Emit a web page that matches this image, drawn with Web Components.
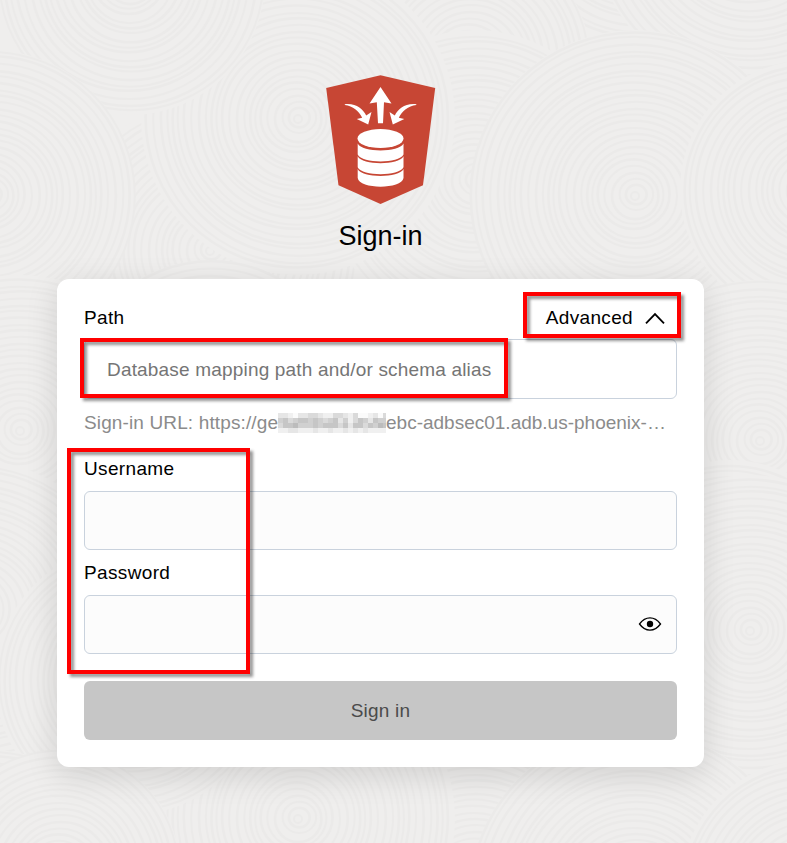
<!DOCTYPE html>
<html lang="en"><head><meta charset="utf-8"><title>Sign-in</title>
<style>
html,body{margin:0;height:843px;overflow:hidden;background:#efeeed}
body{font-family:"Liberation Sans",Arial,sans-serif;color:#000}
</style></head><body><signin-page></signin-page>
<script>
const define=(name,html,setup)=>customElements.define(name,class extends HTMLElement{
  constructor(){super();this.attachShadow({mode:'open'}).innerHTML=html;}
  connectedCallback(){if(setup)setup(this,this.shadowRoot);}
});

/* Overlapping discs of faint concentric rings. */
define('ring-backdrop',`<style>:host{position:absolute;inset:0;z-index:-1}svg{display:block}</style>
<svg width="787" height="843" fill="none"></svg>`,(host,root)=>{
  const base=[[635,-75,118],[470,60,120],[750,-70,155],[210,250,150],[475,180,150],[298,118,157],[130,-20,135],[-10,195,145],[635,195,165],[810,190,130],
    [20,430,155],[210,400,140],[760,440,160],[-25,610,150],[730,590,130]];
  const all=[...base,...base.filter(d=>d[1]<260).map(([x,y,r])=>[x,y+700,r]),[60,870,120]];
  let s='';
  for(const [x,y,r] of all){
    s+=`<circle cx="${x}" cy="${y}" r="${r}" fill="#efeeed"/>`;
    for(let q=4,i=0;q<=r;q+=6.4,i++)
      s+=`<ellipse cx="${x+Math.sin(i)*1.5}" cy="${y+Math.cos(i*2)}" rx="${q}" ry="${q-(i%3)*.6}" stroke="#ebeae9" stroke-width="${2+(i%2)*.6}"/>`;
  }
  root.querySelector('svg').innerHTML=s;
});

define('brand-logo',`<style>:host{display:block;width:110px;height:130px}svg{display:block}</style>
<svg width="110" height="130" viewBox="0 0 110 130"><path fill="#c74634" d="M54.5.2 109.2 13 97 110.3 54.5 129 12.5 110.3.2 13z"/>
<g fill="#fff"><path d="M54.5 12 65.5 28.4 58 27.3 57 48.3H52L50.8 27.3 43.5 28.4z"/>
<path d="M18.8 29.2C30 28 37 34 40.2 40.5L45.5 37 42.2 49.5 30.8 44 36.2 42.7C32.8 35.8 27 31 18.8 30z"/>
<path d="M90.3 29.2C79 28 72 34 68.8 40.5L63.5 37 66.8 49.5 78.3 44 72.8 42.7C76.2 35.8 82 31 90.3 30z"/>
<ellipse cx="54.5" cy="63.5" rx="23" ry="9.5"/>
<path d="M31.7 68.5C36 77.8 73 77.8 77.5 68.5V79.5C73 88.8 36 88.8 31.7 79.5z"/>
<path d="M31.7 81.3C36 90.6 73 90.6 77.5 81.3V92.3C73 101.6 36 101.6 31.7 92.3z"/>
<path d="M31.7 94C36 103.3 73 103.3 77.5 94V103C76 114.5 33 114.5 31.7 103z"/></g></svg>`);

define('masked-part',`<style>:host{display:inline-block;width:108px;height:20px;vertical-align:-4px}svg{display:block}</style>
<svg width="108" height="20" shape-rendering="crispEdges"></svg>`,(host,root)=>{
  const rows=['22102233211332130012033','45345545434524135425441','35564445455535255354655','11221112112112121211111'];
  const c=['#fbfbfb','#f0f0f0','#e6e6e6','#dadada','#d0d0d0','#c6c6c6','#bcbcbc'];
  root.querySelector('svg').innerHTML=rows.map((r,y)=>[...r].map((v,x)=>`<path fill="${c[v]}" d="M${x*5} ${y*5}h5v5h-5z"/>`).join('')).join('');
});

define('text-field',`<style>:host{display:block}
label{display:block;font-size:19px;line-height:22px;letter-spacing:.35px;padding-top:var(--label-drop,1px);margin-bottom:calc(12px - var(--label-drop,1px))}
.box{box-sizing:border-box;height:var(--field-height,59px);border:1px solid #c9d2dd;border-radius:6px;background:var(--field-fill,#fcfcfc);display:flex;align-items:center;justify-content:space-between;padding:2px 14px 0 22px;font-size:19px;letter-spacing:.18px;color:#757575}
.head{display:flex;justify-content:space-between}.icon{margin:-3px 0 0 auto}</style>
<div class="head"><label></label><slot name="action"></slot></div><div class="box"><slot></slot><div class="icon"><slot name="icon"></slot></div></div>`,
(host,root)=>root.querySelector('label').textContent=host.getAttribute('label'));

define('advanced-toggle',`<style>:host{display:flex;align-items:flex-start;gap:12px;font-size:19px;line-height:22px;letter-spacing:.35px;padding-right:12px}span{padding-top:2px}svg{margin-top:7px}</style>
<span>Advanced</span><svg width="20" height="13" fill="none" stroke="#000" stroke-width="1.8"><path d="M1 11.3 10 2l9 9.3"/></svg>`);

define('eye-icon',`<style>:host{display:block}svg{display:block}</style>
<svg width="24" height="16" viewBox="0 0 24 16"><path fill="none" stroke="#000" stroke-width="1.3" d="M1.5 8C7.5-.2 16.5-.2 22.5 8 16.5 16.2 7.5 16.2 1.5 8z"/><circle cx="12" cy="8" r="3.2"/></svg>`);

define('submit-button',`<style>:host{display:block}button{display:block;width:100%;height:59px;border:0;border-radius:6px;background:#c6c6c6;color:#4b4b4b;font:19px "Liberation Sans",Arial,sans-serif;letter-spacing:.2px;padding:0}</style><button><slot></slot></button>`);

define('callout-box',`<style>:host{position:absolute;box-sizing:border-box;border:4px solid #f00;pointer-events:none;filter:drop-shadow(3px 3px 1.5px rgba(0,0,0,.42))}</style>`);

define('signin-card',`<style>
:host{display:block;box-sizing:border-box;width:647px;height:488px;padding:27px;border-radius:12px;background:#fff;box-shadow:0 8px 32px rgba(0,0,0,.13)}
.path{--field-height:60px;--field-fill:#fff;--label-drop:2px;margin-top:-1px}
.url{font-size:19px;line-height:22px;height:22px;color:#8b8b8b;white-space:nowrap;margin:13px 0 23px}
.start{display:inline-block;width:194px;letter-spacing:.13px}
text-field+text-field{margin-top:11px}submit-button{margin-top:27px}</style>
<text-field class="path" label="Path"><advanced-toggle slot="action"></advanced-toggle>Database mapping path and/or schema alias</text-field>
<div class="url"><span class="start">Sign-in URL: https://ge</span><masked-part></masked-part>ebc-adbsec01.adb.us-phoenix-…</div>
<text-field label="Username"></text-field><text-field label="Password"><eye-icon slot="icon"></eye-icon></text-field>
<submit-button>Sign in</submit-button>`);

define('signin-page',`<style>
:host{display:block;position:relative;isolation:isolate;width:787px;height:843px;overflow:hidden}
main{display:flex;flex-direction:column;align-items:center;width:647px;padding:75px 0 0 57px}
h1{font-size:27px;line-height:32px;font-weight:400;margin:15px 0 27px}
.one{left:523px;top:292px;width:158px;height:46px}.two{left:80px;top:338px;width:428px;height:60px}.three{left:67px;top:448px;width:183px;height:226px}</style>
<ring-backdrop></ring-backdrop><main><brand-logo></brand-logo><h1>Sign-in</h1><signin-card></signin-card></main>
<callout-box class="one"></callout-box><callout-box class="two"></callout-box><callout-box class="three"></callout-box>`);
</script></body></html>
